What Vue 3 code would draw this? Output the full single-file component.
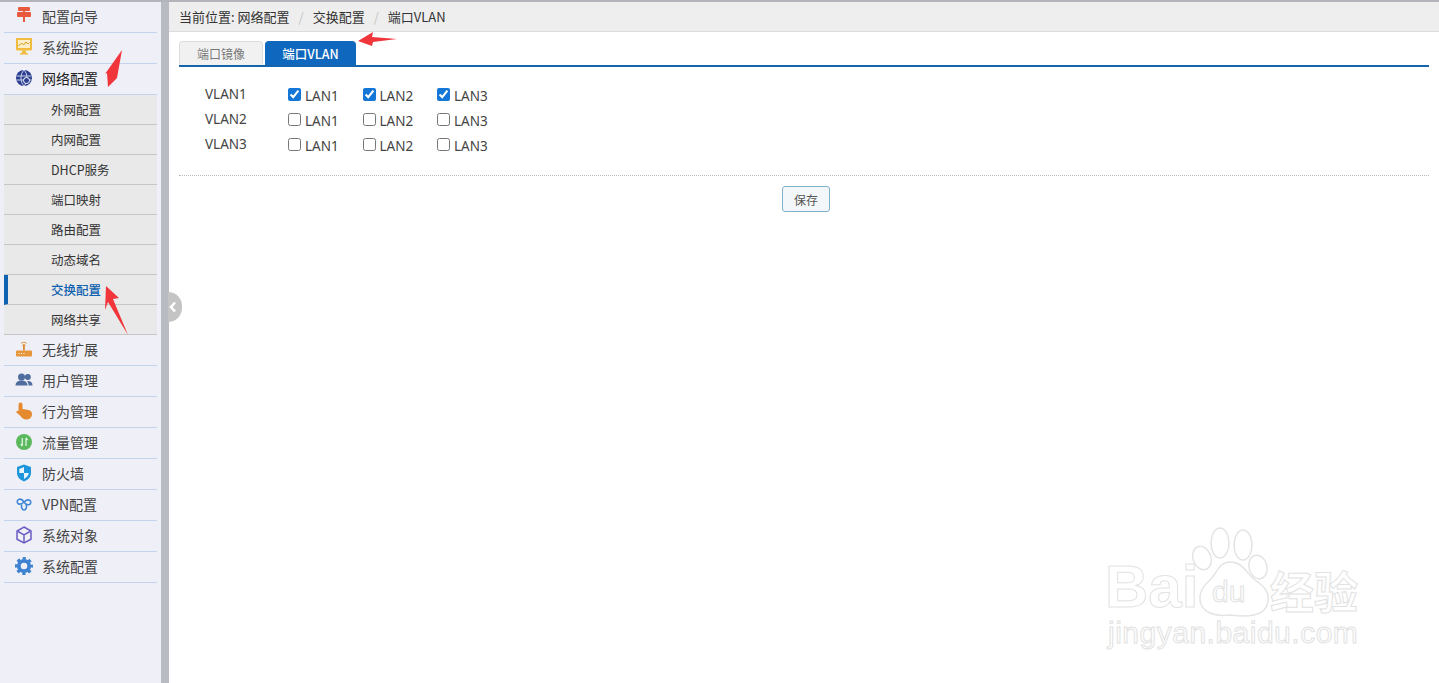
<script setup>
const before = [
  { label: '配置向导', icon: 'pin' },
  { label: '系统监控', icon: 'monitor' },
  { label: '网络配置', icon: 'globe' },
]
const subs = ['外网配置', '内网配置', 'DHCP服务', '端口映射', '路由配置', '动态域名', '交换配置', '网络共享']
const after = [
  { label: '无线扩展', icon: 'router' },
  { label: '用户管理', icon: 'users' },
  { label: '行为管理', icon: 'hand' },
  { label: '流量管理', icon: 'flow' },
  { label: '防火墙', icon: 'shield' },
  { label: 'VPN配置', icon: 'vpn' },
  { label: '系统对象', icon: 'cube' },
  { label: '系统配置', icon: 'gear' },
]
const vlans = [
  { name: 'VLAN1', on: true },
  { name: 'VLAN2', on: false },
  { name: 'VLAN3', on: false },
]
const ports = ['LAN1', 'LAN2', 'LAN3']
</script>

<template>
  <div class="page">
    <aside class="side">
      <div v-for="m in before" :key="m.label" class="item">
        <span class="ico"><svg width="18" height="18" viewBox="0 0 18 18">
          <template v-if="m.icon === 'pin'">
            <rect x="3" y="0" width="12" height="4" rx="1" fill="#e9573f"/>
            <rect x="2" y="5" width="14" height="5" rx="1" fill="#e9573f"/>
            <rect x="8" y="0" width="2" height="15" fill="#e9573f"/>
          </template>
          <template v-else-if="m.icon === 'monitor'">
            <rect x="1" y="0" width="16" height="12.500" rx="1" fill="#f1bb3f"/>
            <rect x="3" y="2" width="12" height="8" fill="#fbefc9"/>
            <path d="M3.500 8l3-3 2 2 2.500-3 2 2 1.500-1.500" fill="none" stroke="#d99a1c" stroke-width="1"/>
            <rect x="7" y="12.500" width="4" height="3" fill="#f1bb3f"/>
            <rect x="5" y="15" width="8" height="1.500" fill="#f1bb3f"/>
          </template>
          <template v-else>
            <circle cx="9" cy="9" r="8" fill="#2c3f8f"/>
            <path d="M1.500 7h15M1.500 11h15M9 1c-4 4-4 12 0 16M9 1c4 4 4 12 0 16" fill="none" stroke="#c9d2ee" stroke-width="1"/>
            <circle cx="11.500" cy="11.500" r="3" fill="#2c3f8f" stroke="#fff" stroke-width="1"/>
          </template>
        </svg></span>
        <span :class="{ strong: m.icon === 'globe' }">{{ m.label }}</span>
      </div>
      <div v-for="s in subs" :key="s" class="sub" :class="{ active: s === '交换配置' }">{{ s }}</div>
      <div v-for="m in after" :key="m.label" class="item">
        <span class="ico"><svg width="18" height="18" viewBox="0 0 18 18">
          <template v-if="m.icon === 'router'">
            <rect x="1" y="10.500" width="16" height="6" rx="1" fill="#e8963c"/>
            <rect x="8" y="4.500" width="1.800" height="6" fill="#d98a33"/>
            <path d="M6 3.500a4 4 0 0 1 5.800 0M7.200 5.500a2 2 0 0 1 3.400 0" fill="none" stroke="#e8963c" stroke-width="1"/>
            <path d="M3.500 13.500h1M6 13.500h1M8.500 13.500h1" stroke="#fff" stroke-width="1"/>
          </template>
          <template v-else-if="m.icon === 'users'">
            <circle cx="6.500" cy="6" r="3.500" fill="#4f6d9f"/>
            <circle cx="12.800" cy="6" r="3" fill="#4f6d9f"/>
            <path d="M0.500 14.500c0-3.500 2.500-5 6-5s6 1.500 6 5z" fill="#4f6d9f"/>
            <path d="M13.500 14.500h4c0-2.800-1.500-4.500-4.500-4.500l-1 .3c1 .9 1.500 2.500 1.500 4.200z" fill="#4f6d9f"/>
          </template>
          <template v-else-if="m.icon === 'hand'">
            <path d="M5.500 0.500c1.100 0 2 .8 2 2V7l5 .8c2.500.5 4.500 1.700 4.500 4.200 0 3.300-2.500 5.500-5.500 5.500-3 0-4.500-1.200-6-3.500L1 10l1.300-1.300 1.200.5V2.500c0-1.200.9-2 2-2z" fill="#e58a2e"/>
          </template>
          <template v-else-if="m.icon === 'flow'">
            <circle cx="9" cy="9" r="8" fill="#5cb85c"/>
            <path d="M7.300 5v8M7.300 13l-1.500-2M11 13V5M11 5l1.500 2" fill="none" stroke="#dff3df" stroke-width="1.300"/>
          </template>
          <template v-else-if="m.icon === 'shield'">
            <path d="M9 .5l7 2.500V9c0 4-3 7-7 8.500C5 16 2 13 2 9V3z" fill="#1f95dc"/>
            <path d="M9 3v6H4.300V5zM9 9h4.800c-.5 2.500-2.300 4.500-4.800 6z" fill="#eaf6fd"/>
          </template>
          <template v-else-if="m.icon === 'vpn'">
            <g fill="none" stroke="#3f86d6" stroke-width="1.600">
              <path d="M9 7C7.500 4.500 5.800 3.800 4.200 4.200 2 4.800 1.500 7.600 3.300 8.700 5 9.700 7 8.800 9 7c2-1.800 4-2.700 5.700-1.700 1.800 1.100 1.300 3.900-.9 4.400-1.600.4-3.300-.3-4.800-2.700"/>
              <path d="M6.800 9.500C6 11.500 6.800 15 9 15s3-3.500 2.200-5.500"/>
            </g>
          </template>
          <template v-else-if="m.icon === 'cube'">
            <g fill="none" stroke="#6c5cc4" stroke-width="1.500">
              <path d="M9 1l7 4v8.200L9 17l-7-3.800V5z"/>
              <path d="M3 5.500l6 3.500 6-3.500M9 9v7.500"/>
            </g>
          </template>
          <template v-else>
            <circle cx="9" cy="9" r="5.200" fill="none" stroke="#3d82d0" stroke-width="3.800"/>
            <circle cx="9" cy="9" r="7.700" fill="none" stroke="#3d82d0" stroke-width="2.600" stroke-dasharray="3.200 2.850" stroke-dashoffset="1.600"/>
          </template>
        </svg></span>
        <span>{{ m.label }}</span>
      </div>
    </aside>

    <div class="divider">
      <span class="handle">
        <svg width="10" height="12" viewBox="0 0 10 12"><path d="M7 1.500L3 6l4 4.500" fill="none" stroke="#fff" stroke-width="2.600"/></svg>
      </span>
    </div>

    <main class="main">
      <div class="crumb">
        <span>当前位置: 网络配置</span><i>/</i><span>交换配置</span><i>/</i><span>端口VLAN</span>
      </div>
      <div class="body">
        <div class="tabs">
          <span class="tab">端口镜像</span>
          <span class="tab on">端口VLAN</span>
        </div>
        <div class="table">
          <div v-for="v in vlans" :key="v.name" class="row">
            <span class="vname">{{ v.name }}</span>
            <label v-for="p in ports" :key="p" class="port">
              <input type="checkbox" :checked="v.on" />
              <span>{{ p }}</span>
            </label>
          </div>
        </div>
        <div class="actions"><button class="save">保存</button></div>
      </div>
    </main>

    <svg class="arrows" width="420" height="340" viewBox="0 0 420 340">
      <path d="M122 50l-5 28-9 9-1-14-2 1z" fill="#f0353b"/>
      <path d="M106 286l13 12-6 1 15 36-20-33-3 8z" fill="#f0353b"/>
      <path d="M358 41l15-9-1 5 25 2-24 3-1 4z" fill="#f0353b"/>
    </svg>

    <div class="mark">
      <svg class="paw" width="90" height="100" viewBox="0 0 90 100">
        <g fill="#fff" stroke="#e4e4e4" stroke-width="1.500">
          <ellipse cx="12" cy="33" rx="9" ry="12" transform="rotate(-20 12 33)"/>
          <ellipse cx="30" cy="18" rx="9" ry="15"/>
          <ellipse cx="53" cy="20" rx="9" ry="15"/>
          <ellipse cx="68" cy="42" rx="9" ry="12" transform="rotate(-15 68 42)"/>
          <path d="M40 37c-11 0-13 11-20 18-6 5-11 11-10 20 1 12 14 17 30 15 14 2 37 3 38-15 1-10-6-15-13-20-9-7-12-18-25-18z"/>
        </g>
      </svg>
      <span class="bai">Bai</span><span class="du">du</span><span class="jy">经验</span>
      <span class="url">jingyan.baidu.com</span>
    </div>
  </div>
</template>

<style>
html, body { margin: 0; background: #fff; }
</style>

<style scoped>
.page {
  position: relative;
  width: 1439px;
  height: 683px;
  display: flex;
  overflow: hidden;
  box-sizing: border-box;
  border-top: 2px solid #b4b5ba;
  font-family: "Noto Sans CJK SC", "Liberation Sans", sans-serif;
  color: #333;
  background: #fff;
}
.side {
  width: 161px;
  flex: none;
  box-sizing: border-box;
  padding: 0 4px;
  background: #eff0f7;
}
.item {
  height: 31px;
  box-sizing: border-box;
  border-bottom: 1px solid #c4d3ec;
  padding-bottom: 3px;
  display: flex;
  align-items: center;
  font-size: 14px;
  color: #444;
}
.ico {
  width: 38px;
  padding-left: 11px;
  box-sizing: border-box;
  display: flex;
  flex: none;
}
.strong { color: #222; }
.sub {
  height: 30px;
  box-sizing: border-box;
  border-bottom: 1px solid #c6c6c6;
  background: #e9e9e9;
  font-size: 12.500px;
  color: #333;
  line-height: 29px;
  padding-left: 47px;
}
.sub.active {
  color: #0f62b0;
  font-weight: 500;
  border-left: 4px solid #0f62b0;
  padding-left: 43px;
}
.divider {
  position: relative;
  width: 8px;
  flex: none;
  background: #b9bbc3;
}
.handle {
  position: absolute;
  left: 7px;
  top: 290px;
  width: 14px;
  height: 30px;
  border-radius: 0 15px 15px 0;
  background: #c4c4c4;
  display: flex;
  align-items: center;
  justify-content: flex-start;
}
.main { flex: 1; min-width: 0; }
.crumb {
  height: 30px;
  box-sizing: border-box;
  background: #eeeeee;
  border-bottom: 1px solid #dcdcdc;
  padding-left: 10px;
  display: flex;
  align-items: center;
  font-size: 13px;
  color: #333;
}
.crumb i {
  font-style: normal;
  color: #c4c4c4;
  margin: 0 9px;
}
.body { padding: 9px 10px 0; }
.tabs {
  display: flex;
  gap: 2px;
  height: 24px;
  border-bottom: 2px solid #1565ad;
  align-items: flex-end;
}
.tab {
  width: 84px;
  height: 24px;
  box-sizing: border-box;
  border: 1px solid #ddd;
  border-bottom: none;
  border-radius: 4px 4px 0 0;
  background: #f1f1f1;
  color: #777;
  font-size: 12px;
  text-align: center;
  line-height: 23px;
}
.tab.on {
  width: 91px;
  background: #0f68bd;
  border-color: #0f68bd;
  color: #fff;
  font-size: 12.500px;
  font-weight: 500;
}
.table { padding: 15px 0 18px 26px; border-bottom: 1px dotted #bbb; }
.row {
  height: 25px;
  display: flex;
  align-items: flex-start;
  font-family: "Noto Sans", "Liberation Sans", sans-serif;
  color: #444;
}
.vname { width: 83px; padding-top: 2px; flex: none; font-size: 13.500px; line-height: 20px; }
.port {
  width: 74.500px;
  display: flex;
  align-items: center;
  flex: none;
  height: 25px;
  font-size: 13.500px;
  margin-top: 1px;
}
.port input {
  width: 13px;
  height: 13px;
  margin: 0 4px 3px 0;
  accent-color: #1476d6;
}
.actions { display: flex; justify-content: center; padding-top: 10px; padding-left: 4px; }
.save {
  width: 48px;
  height: 26px;
  padding: 0;
  border: 1px solid #7fb0cc;
  border-radius: 3px;
  background: #f4f7f9;
  color: #555;
  font-size: 12px;
  font-family: "Noto Sans CJK SC", sans-serif;
}
.arrows { position: absolute; left: 0; top: -2px; pointer-events: none; }
.mark {
  position: absolute;
  left: 1100px;
  top: 523px;
  width: 280px;
  height: 135px;
  pointer-events: none;
}
.paw { position: absolute; left: 90px; top: 0; }
.bai, .du, .jy, .url {
  position: absolute;
  color: #fff;
  line-height: 1;
  -webkit-text-stroke: 1px #e2e2e2;
  font-family: "Liberation Sans", sans-serif;
}
.bai { left: 5px; top: 32px; font-size: 60px; font-weight: 700; }
.du { left: 112px; top: 52px; font-size: 30px; }
.jy { left: 170px; top: 43px; font-size: 44px; font-family: "Noto Sans CJK SC", sans-serif; font-weight: 700; }
.url { left: 8px; top: 93px; font-size: 30px; letter-spacing: .5px; }
</style>
